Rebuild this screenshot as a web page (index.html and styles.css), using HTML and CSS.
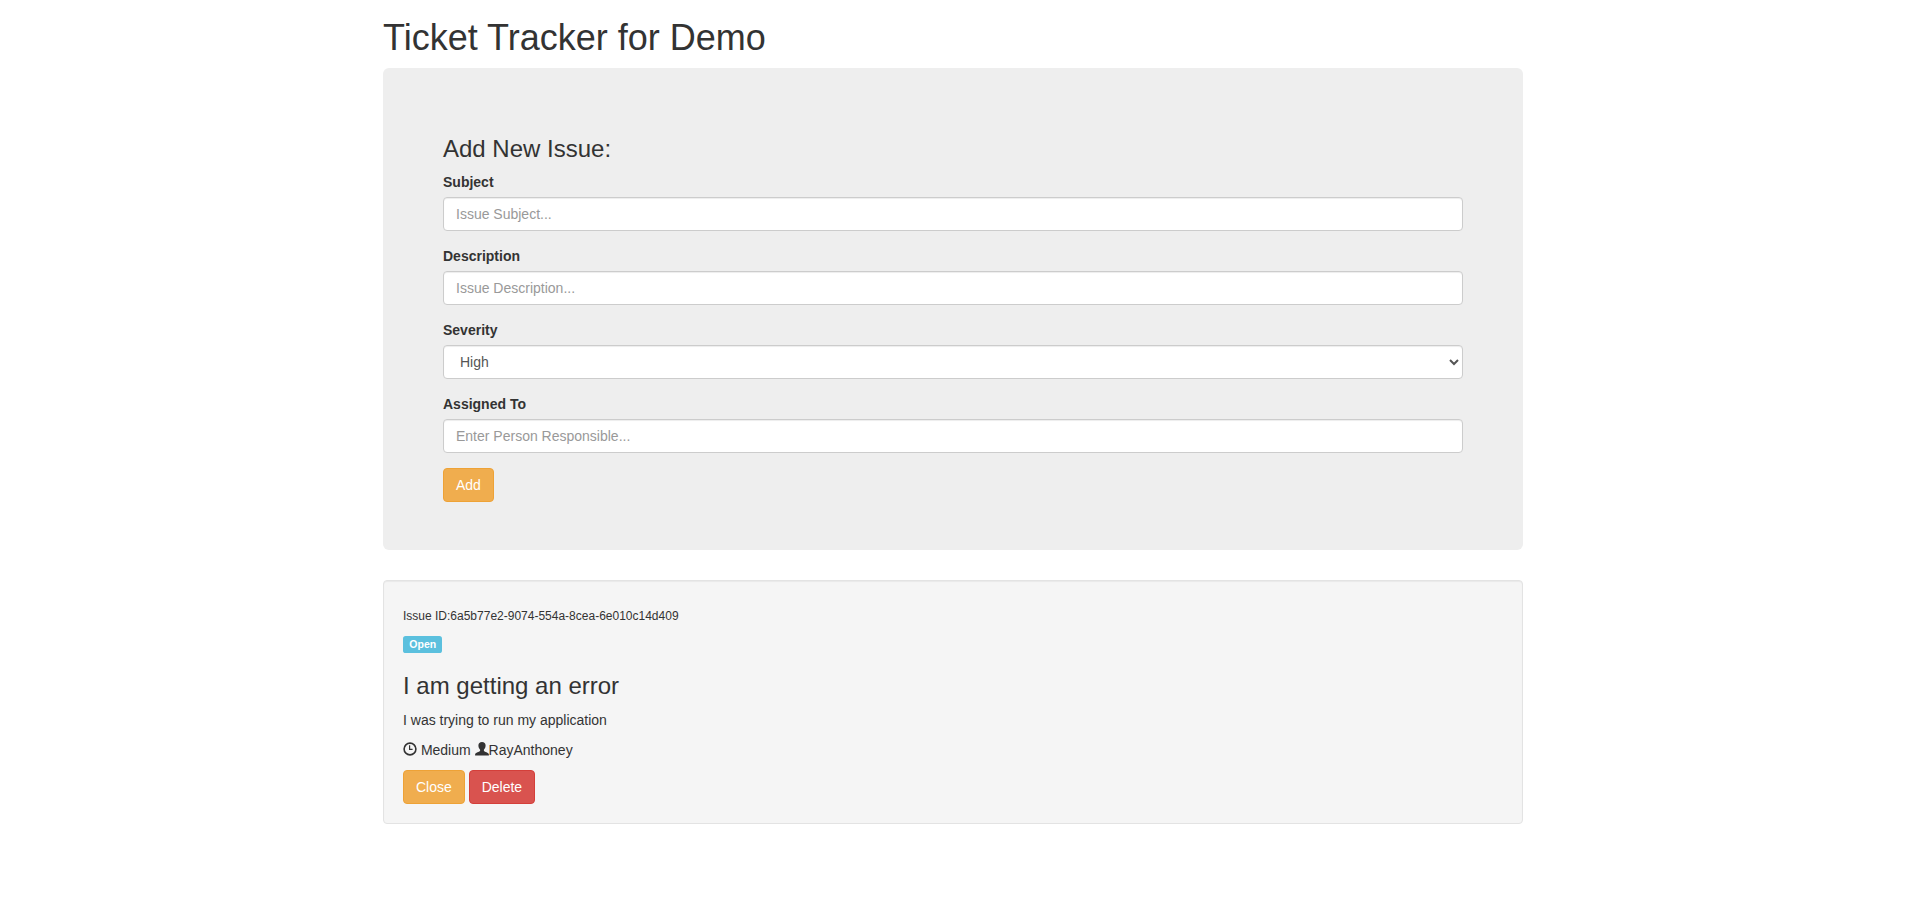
FILE: index.html
```html
<!DOCTYPE html>
<html lang="en">
<head>
<meta charset="utf-8">
<title>Ticket Tracker</title>
<link rel="stylesheet" href="styles.css">
</head>
<body>
<div class="container">
  <h1>Ticket Tracker for Demo</h1>
  <div class="jumbotron">
    <h3>Add New Issue:</h3>
    <form>
      <div class="form-group">
        <label for="subject">Subject</label>
        <input type="text" class="form-control" id="subject" placeholder="Issue Subject...">
      </div>
      <div class="form-group">
        <label for="desc">Description</label>
        <input type="text" class="form-control" id="desc" placeholder="Issue Description...">
      </div>
      <div class="form-group">
        <label for="severity">Severity</label>
        <select class="form-control" id="severity"><option>High</option></select>
      </div>
      <div class="form-group">
        <label for="assigned">Assigned To</label>
        <input type="text" class="form-control" id="assigned" placeholder="Enter Person Responsible...">
      </div>
      <button type="button" class="btn btn-warning">Add</button>
    </form>
  </div>
  <div class="well">
    <h6>Issue ID:6a5b77e2-9074-554a-8cea-6e010c14d409</h6>
    <p><span class="label">Open</span></p>
    <h3>I am getting an error</h3>
    <p>I was trying to run my application</p>
    <p><svg class="icon" viewBox="0 0 14 14"><circle cx="7" cy="7" r="5.9" fill="none" stroke="currentColor" stroke-width="1.6"/><path d="M6.6 3.2V7.4H9.6" fill="none" stroke="currentColor" stroke-width="1.2"/></svg> Medium <svg class="icon" viewBox="0 0 14 14"><path d="M7 0C9.2 0 10.6 1.4 10.6 3.6C10.6 5.4 9.8 6.8 8.9 7.8V8.8C9.2 9.9 13.9 10.5 13.9 12.6V13.6H.1V12.6C.1 10.5 4.8 9.9 5.1 8.8V7.8C4.2 6.8 3.4 5.4 3.4 3.6C3.4 1.4 4.8 0 7 0Z" fill="currentColor"/></svg>RayAnthoney</p>
    <a class="btn btn-warning">Close</a>
    <a class="btn btn-danger">Delete</a>
  </div>
</div>
</body>
</html>
```
FILE: styles.css
```css
* { box-sizing: border-box; }
body {
  margin: 0;
  padding-right: 5px;
  font-family: "Liberation Sans", Arial, sans-serif;
  font-size: 14px;
  line-height: 1.42857143;
  color: #333;
  background: #fff;
}
.container { width: 1170px; margin: 0 auto; padding: 0 15px; }
h1, h3, h6 { font-weight: 500; line-height: 1.1; color: inherit; }
h1 { font-size: 36px; margin: 18px 0 10px; }
h3 { font-size: 24px; margin: 20px 0 10px; }
h6 { font-size: 12px; margin: 10px 0; }
p { margin: 0 0 10px; }
.jumbotron { padding: 48px 60px; margin-bottom: 30px; background: #eee; border-radius: 6px; }
.form-group { margin-bottom: 15px; }
label { display: inline-block; margin-bottom: 5px; font-weight: 700; }
input, select, button { font-family: inherit; font-size: inherit; line-height: inherit; margin: 0; }
.form-control {
  display: block;
  width: 100%;
  height: 34px;
  padding: 6px 12px;
  font-size: 14px;
  line-height: 1.42857143;
  color: #555;
  background-color: #fff;
  border: 1px solid #ccc;
  border-radius: 4px;
  box-shadow: inset 0 1px 1px rgba(0, 0, 0, .075);
}
.form-control::placeholder { color: #999; opacity: 1; }
.btn {
  display: inline-block;
  padding: 6px 12px;
  font-size: 14px;
  line-height: 1.42857143;
  text-align: center;
  white-space: nowrap;
  vertical-align: middle;
  cursor: pointer;
  color: #fff;
  border: 1px solid transparent;
  border-radius: 4px;
}
.btn-warning { background: #f0ad4e; border-color: #eea236; }
.btn-danger { background: #d9534f; border-color: #d43f3a; }
.well {
  min-height: 20px;
  padding: 19px;
  margin-bottom: 20px;
  background: #f5f5f5;
  border: 1px solid #e3e3e3;
  border-radius: 4px;
  box-shadow: inset 0 1px 1px rgba(0, 0, 0, .05);
}
.label {
  display: inline;
  padding: .2em .6em .3em;
  font-size: 75%;
  font-weight: 700;
  line-height: 1;
  color: #fff;
  background: #5bc0de;
  border-radius: .25em;
}
.icon { display: inline-block; position: relative; top: 1px; width: 14px; height: 14px; }
```
